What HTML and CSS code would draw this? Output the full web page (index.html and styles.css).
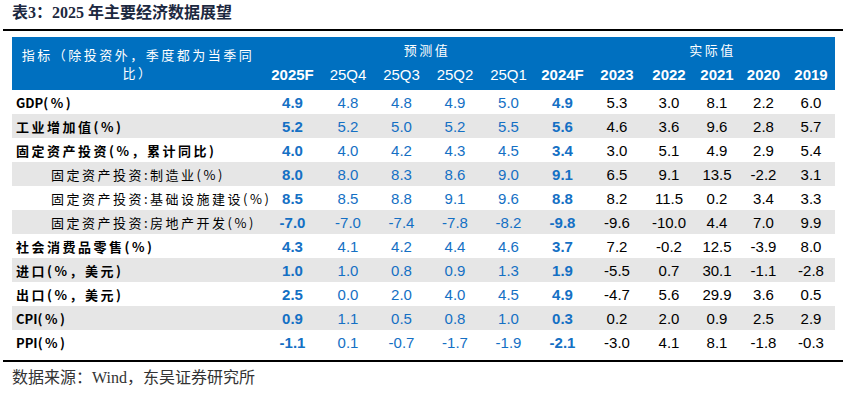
FILE: index.html
```html
<!DOCTYPE html>
<html lang="zh-CN">
<head>
<meta charset="utf-8">
<title>表3：2025 年主要经济数据展望</title>
<link rel="stylesheet" href="styles.css">
</head>
<body>
<h1 class="title">表3：2025 年主要经济数据展望</h1>
<div class="rule rule-top"></div>
<table class="data">
  <colgroup>
    <col class="c-label">
    <col class="c57"><col class="c54"><col class="c53"><col class="c54"><col class="c53"><col class="c55">
    <col class="c54"><col class="c50"><col class="c46"><col class="c47"><col class="c48">
  </colgroup>
  <thead>
    <tr class="h1">
      <th rowspan="2" class="h-label">指标（除投资外，季度都为当季同<br>比）</th>
      <th colspan="6" class="h-group">预测值</th>
      <th colspan="5" class="h-group">实际值</th>
    </tr>
    <tr class="h2">
      <th class="b">2025F</th><th>25Q4</th><th>25Q3</th><th>25Q2</th><th>25Q1</th><th class="b">2024F</th>
      <th class="b">2023</th><th class="b">2022</th><th class="b">2021</th><th class="b">2020</th><th class="b">2019</th>
    </tr>
  </thead>
  <tbody>
    <tr>
      <td class="lbl main"><span class="lat">GDP</span>(%)</td>
      <td class="f b">4.9</td><td class="f">4.8</td><td class="f">4.8</td><td class="f">4.9</td><td class="f">5.0</td><td class="f b">4.9</td>
      <td>5.3</td><td>3.0</td><td>8.1</td><td>2.2</td><td>6.0</td>
    </tr>
    <tr class="g">
      <td class="lbl main">工业增加值(%)</td>
      <td class="f b">5.2</td><td class="f">5.2</td><td class="f">5.0</td><td class="f">5.2</td><td class="f">5.5</td><td class="f b">5.6</td>
      <td>4.6</td><td>3.6</td><td>9.6</td><td>2.8</td><td>5.7</td>
    </tr>
    <tr>
      <td class="lbl main">固定资产投资(%，累计同比)</td>
      <td class="f b">4.0</td><td class="f">4.0</td><td class="f">4.2</td><td class="f">4.3</td><td class="f">4.5</td><td class="f b">3.4</td>
      <td>3.0</td><td>5.1</td><td>4.9</td><td>2.9</td><td>5.4</td>
    </tr>
    <tr class="g">
      <td class="lbl sub">固定资产投资:制造业(%)</td>
      <td class="f b">8.0</td><td class="f">8.0</td><td class="f">8.3</td><td class="f">8.6</td><td class="f">9.0</td><td class="f b">9.1</td>
      <td>6.5</td><td>9.1</td><td>13.5</td><td>-2.2</td><td>3.1</td>
    </tr>
    <tr>
      <td class="lbl sub">固定资产投资:基础设施建设(%)</td>
      <td class="f b">8.5</td><td class="f">8.5</td><td class="f">8.8</td><td class="f">9.1</td><td class="f">9.6</td><td class="f b">8.8</td>
      <td>8.2</td><td>11.5</td><td>0.2</td><td>3.4</td><td>3.3</td>
    </tr>
    <tr class="g">
      <td class="lbl sub">固定资产投资:房地产开发(%)</td>
      <td class="f b">-7.0</td><td class="f">-7.0</td><td class="f">-7.4</td><td class="f">-7.8</td><td class="f">-8.2</td><td class="f b">-9.8</td>
      <td>-9.6</td><td>-10.0</td><td>4.4</td><td>7.0</td><td>9.9</td>
    </tr>
    <tr>
      <td class="lbl main">社会消费品零售(%)</td>
      <td class="f b">4.3</td><td class="f">4.1</td><td class="f">4.2</td><td class="f">4.4</td><td class="f">4.6</td><td class="f b">3.7</td>
      <td>7.2</td><td>-0.2</td><td>12.5</td><td>-3.9</td><td>8.0</td>
    </tr>
    <tr class="g">
      <td class="lbl main">进口(%，美元)</td>
      <td class="f b">1.0</td><td class="f">1.0</td><td class="f">0.8</td><td class="f">0.9</td><td class="f">1.3</td><td class="f b">1.9</td>
      <td>-5.5</td><td>0.7</td><td>30.1</td><td>-1.1</td><td>-2.8</td>
    </tr>
    <tr>
      <td class="lbl main">出口(%，美元)</td>
      <td class="f b">2.5</td><td class="f">0.0</td><td class="f">2.0</td><td class="f">4.0</td><td class="f">4.5</td><td class="f b">4.9</td>
      <td>-4.7</td><td>5.6</td><td>29.9</td><td>3.6</td><td>0.5</td>
    </tr>
    <tr class="g">
      <td class="lbl main"><span class="lat">CPI</span>(%)</td>
      <td class="f b">0.9</td><td class="f">1.1</td><td class="f">0.5</td><td class="f">0.8</td><td class="f">1.0</td><td class="f b">0.3</td>
      <td>0.2</td><td>2.0</td><td>0.9</td><td>2.5</td><td>2.9</td>
    </tr>
    <tr>
      <td class="lbl main"><span class="lat">PPI</span>(%)</td>
      <td class="f b">-1.1</td><td class="f">0.1</td><td class="f">-0.7</td><td class="f">-1.7</td><td class="f">-1.9</td><td class="f b">-2.1</td>
      <td>-3.0</td><td>4.1</td><td>8.1</td><td>-1.8</td><td>-0.3</td>
    </tr>
  </tbody>
</table>
<div class="rule rule-bottom"></div>
<p class="source">数据来源：Wind，东吴证券研究所</p>
</body>
</html>
```

FILE: styles.css
```css
html, body {
  margin: 0;
  padding: 0;
  background: #ffffff;
}

body {
  width: 854px;
  font-family: "Liberation Sans", "Noto Sans CJK SC", sans-serif;
  color: #000;
}

.title {
  margin: 0;
  padding: 3px 0 0 12px;
  font-family: "Liberation Serif", "Noto Sans CJK SC", serif;
  font-weight: bold;
  font-size: 16px;
  line-height: 20px;
  color: #1c2840;
}

.rule {
  margin-left: 3px;
  margin-right: 11px;
  border-top: 2px solid #000;
}

.rule-top {
  margin-top: 6px;
}

.data {
  margin: 6px 0 0 12px;
  width: 823px;
  border-collapse: collapse;
  table-layout: fixed;
}

.c-label { width: 252px; }
.c57 { width: 57px; }
.c55 { width: 55px; }
.c54 { width: 54px; }
.c53 { width: 53px; }
.c50 { width: 50px; }
.c48 { width: 48px; }
.c47 { width: 47px; }
.c46 { width: 46px; }

.data th {
  background: #0070c0;
  color: #ffffff;
  padding: 0;
  font-weight: normal;
}

.h1 th {
  height: 25px;
}

.h-group {
  font-family: "Noto Sans CJK SC", sans-serif;
  font-size: 13px;
  letter-spacing: 2.5px;
  vertical-align: middle;
  padding-top: 6px;
  padding-left: 6px;
  line-height: 18px;
}

.h-label {
  font-family: "Noto Sans CJK SC", sans-serif;
  font-size: 13px;
  letter-spacing: 2.5px;
  line-height: 18px;
  text-align: center;
  padding: 0 0 0 4px;
}

.h2 th {
  height: 24px;
  font-family: "Liberation Sans", sans-serif;
  font-size: 15px;
  line-height: 17px;
  vertical-align: middle;
  padding-bottom: 4px;
}

.data th.b {
  font-weight: bold;
}

.data td {
  height: 24px;
  padding: 0;
  text-align: center;
  vertical-align: middle;
  font-family: "Liberation Sans", sans-serif;
  font-size: 15px;
  line-height: 17px;
  color: #000;
}

.data tr.g td {
  background: #e6e6e6;
}

.data td.f {
  color: #1470c4;
}

.data td.b {
  font-weight: bold;
}

.data td.lbl {
  text-align: left;
  font-family: "Noto Sans CJK SC", sans-serif;
  font-size: 13px;
  letter-spacing: 2.5px;
  white-space: nowrap;
  color: #000;
}

.data td.main {
  padding-left: 4px;
  font-weight: bold;
}

.data td.sub {
  padding-left: 39px;
  font-weight: normal;
}

.lat {
  letter-spacing: 0;
}

.rule-bottom {
  margin-top: 6px;
}

.source {
  margin: 7px 0 0 12px;
  font-family: "Liberation Serif", "Noto Sans CJK SC", serif;
  font-size: 16px;
  line-height: 18px;
  color: #333333;
}
```
